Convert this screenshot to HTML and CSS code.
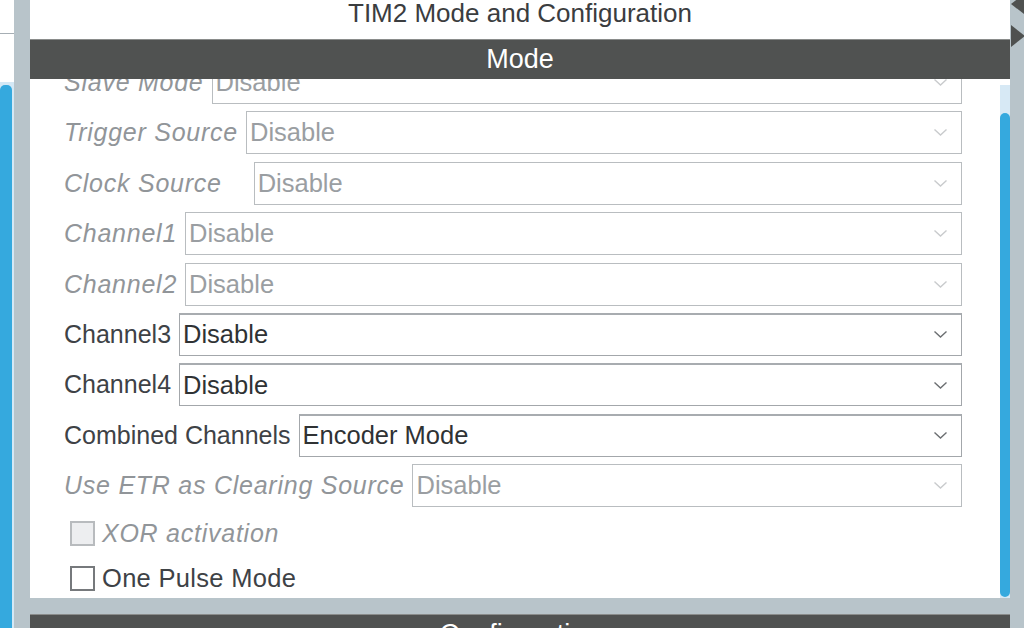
FILE: index.html
```html
<!DOCTYPE html>
<html lang="en">
<head>
<meta charset="utf-8">
<title>TIM2 Mode and Configuration</title>
<link rel="stylesheet" href="styles.css">
</head>
<body>
<div class="app">
  <aside class="side-pane">
    <div class="side-top"></div>
    <div class="side-track"><div class="side-thumb"></div></div>
  </aside>

  <main class="main">
    <section class="panel">
      <h1 class="panel-title">TIM2 Mode and Configuration</h1>
      <h2 class="section-header">Mode</h2>
      <div class="panel-body">
        <div class="viewport">
          <div class="form">
            <div class="row is-disabled">
              <span class="row-label">Slave Mode</span>
              <div class="select"><span>Disable</span><svg class="chev" viewBox="0 0 13 7"><path d="M0.5 0.5 L6.5 6 L12.5 0.5"/></svg></div>
            </div>
            <div class="row is-disabled">
              <span class="row-label">Trigger Source</span>
              <div class="select"><span>Disable</span><svg class="chev" viewBox="0 0 13 7"><path d="M0.5 0.5 L6.5 6 L12.5 0.5"/></svg></div>
            </div>
            <div class="row is-disabled">
              <span class="row-label row-label--wide">Clock Source</span>
              <div class="select"><span>Disable</span><svg class="chev" viewBox="0 0 13 7"><path d="M0.5 0.5 L6.5 6 L12.5 0.5"/></svg></div>
            </div>
            <div class="row is-disabled">
              <span class="row-label">Channel1</span>
              <div class="select"><span>Disable</span><svg class="chev" viewBox="0 0 13 7"><path d="M0.5 0.5 L6.5 6 L12.5 0.5"/></svg></div>
            </div>
            <div class="row is-disabled">
              <span class="row-label">Channel2</span>
              <div class="select"><span>Disable</span><svg class="chev" viewBox="0 0 13 7"><path d="M0.5 0.5 L6.5 6 L12.5 0.5"/></svg></div>
            </div>
            <div class="row">
              <span class="row-label">Channel3</span>
              <div class="select"><span>Disable</span><svg class="chev" viewBox="0 0 13 7"><path d="M0.5 0.5 L6.5 6 L12.5 0.5"/></svg></div>
            </div>
            <div class="row">
              <span class="row-label">Channel4</span>
              <div class="select"><span>Disable</span><svg class="chev" viewBox="0 0 13 7"><path d="M0.5 0.5 L6.5 6 L12.5 0.5"/></svg></div>
            </div>
            <div class="row">
              <span class="row-label">Combined Channels</span>
              <div class="select"><span>Encoder Mode</span><svg class="chev" viewBox="0 0 13 7"><path d="M0.5 0.5 L6.5 6 L12.5 0.5"/></svg></div>
            </div>
            <div class="row is-disabled">
              <span class="row-label">Use ETR as Clearing Source</span>
              <div class="select"><span>Disable</span><svg class="chev" viewBox="0 0 13 7"><path d="M0.5 0.5 L6.5 6 L12.5 0.5"/></svg></div>
            </div>
            <label class="check-row is-disabled">
              <span class="checkbox"></span>
              <span class="check-label">XOR activation</span>
            </label>
            <label class="check-row">
              <span class="checkbox"></span>
              <span class="check-label">One Pulse Mode</span>
            </label>
          </div>
        </div>
        <div class="scrollbar"><div class="scroll-thumb"></div></div>
      </div>
    </section>
    <h2 class="section-header section-header--next">Configuration</h2>
  </main>

  <div class="right-rail">
    <svg class="rail-arrows" width="14" height="60" viewBox="0 0 14 60">
      <path d="M14 -6 L1 4 L14 14 Z" />
      <path d="M1 25 L1 47 L15 36 Z" />
    </svg>
  </div>
</div>
</body>
</html>
```

FILE: styles.css
```css
html, body {
  margin: 0;
  padding: 0;
}

body {
  width: 1024px;
  height: 628px;
  overflow: hidden;
  background: #b8c4ca;
  font-family: "Liberation Sans", Arial, sans-serif;
  color: #3c3f42;
}

.app {
  display: flex;
  height: 628px;
  overflow: hidden;
}

/* left collapsed pane */
.side-pane {
  width: 14px;
  flex: none;
  background: #ffffff;
  display: flex;
  flex-direction: column;
}

.side-top {
  height: 33px;
  border-bottom: 1px solid #a6aeb4;
}

.side-track {
  flex: 1;
  margin-top: 48px;
  background: #d4e8f5;
  display: flex;
  padding: 3px 2px 0 0;
}

.side-thumb {
  flex: 1;
  background: #35a9de;
  border-radius: 5px 5px 0 0;
}

/* main column */
.main {
  width: 980px;
  flex: none;
  margin-left: 16px;
  display: flex;
  flex-direction: column;
  overflow: hidden;
}

.panel {
  flex: none;
  height: 598px;
  background: #ffffff;
  display: flex;
  flex-direction: column;
}

.panel-title {
  margin: 0;
  flex: none;
  height: 39px;
  line-height: 27px;
  font-size: 26px;
  font-weight: normal;
  text-align: center;
  color: #3b3d3f;
}

.section-header {
  margin: 0;
  flex: none;
  height: 40px;
  box-sizing: border-box;
  border-top: 1px solid #8a8c8b;
  background: #505251;
  color: #ffffff;
  font-size: 27px;
  font-weight: normal;
  line-height: 38px;
  text-align: center;
}

.section-header--next {
  margin-top: 16px;
}

.panel-body {
  flex: 1;
  display: flex;
  overflow: hidden;
}

.viewport {
  flex: 1;
  overflow: hidden;
  padding: 0 38px 0 34px;
}

.form {
  margin-top: -18px;
  display: flex;
  flex-direction: column;
  gap: 7.4px;
}

.row {
  height: 43px;
  display: flex;
  align-items: center;
  gap: 8px;
}

.row-label {
  font-size: 25px;
  color: #3e4246;
  white-space: nowrap;
}

.row-label--wide {
  margin-right: 24px;
}

.select {
  flex: 1;
  height: 43px;
  box-sizing: border-box;
  border: 1px solid #a3a7ab;
  border-top: 2px solid #a8acb0;
  display: flex;
  align-items: center;
  justify-content: space-between;
  padding: 0 14px 0 3px;
  font-size: 25.5px;
  color: #2f3234;
  background: #ffffff;
}

.chev {
  width: 13px;
  height: 7px;
  fill: none;
  stroke: #6c6f72;
  stroke-width: 1.4;
}

.is-disabled .row-label {
  font-style: italic;
  letter-spacing: 0.75px;
  color: #919599;
}

.is-disabled .select {
  border: 1px solid #b9bdc0;
  color: #9a9ea2;
}

.is-disabled .chev {
  stroke: #c9cbcd;
}

.check-row {
  height: 38px;
  display: flex;
  align-items: center;
  gap: 7px;
  padding-left: 6px;
}

.checkbox {
  width: 25px;
  height: 25px;
  flex: none;
  box-sizing: border-box;
  border: 2px solid #76797c;
  background: #ffffff;
}

.check-label {
  font-size: 25.5px;
  letter-spacing: 0.3px;
  color: #3e4246;
}

.check-row.is-disabled .checkbox {
  border-color: #b8bbbe;
  background: #edeef0;
}

.check-row.is-disabled .check-label {
  font-style: italic;
  font-size: 25px;
  letter-spacing: 0.75px;
  color: #919599;
}

/* vertical scrollbar */
.scrollbar {
  width: 10px;
  flex: none;
  display: flex;
  flex-direction: column;
  padding-top: 34px;
  padding-bottom: 1px;
  background: linear-gradient(#ffffff, #ffffff) top / 100% 6px no-repeat, #d7e9f5;
}

.scroll-thumb {
  flex: 1;
  background: #35a9de;
  border-radius: 5px;
}

/* right rail */
.right-rail {
  width: 14px;
  flex: none;
}

.rail-arrows {
  display: block;
  fill: #4f5150;
}
```
